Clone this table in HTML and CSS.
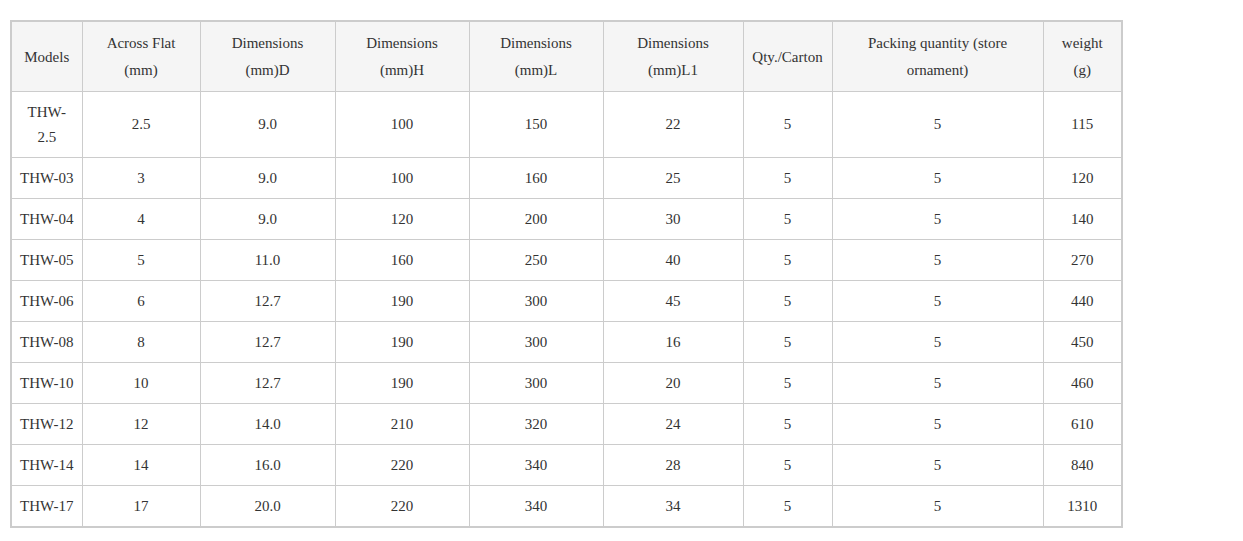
FILE: index.html
```html
<!DOCTYPE html>
<html lang="en">
<head>
<meta charset="utf-8">
<title>THW specifications</title>
<link rel="stylesheet" href="styles.css">
</head>
<body>
<div class="wrap">
<table class="spec">
  <colgroup>
    <col class="c1"><col class="c2"><col class="c3"><col class="c4"><col class="c5"><col class="c6"><col class="c7"><col class="c8"><col class="c9">
  </colgroup>
  <thead>
    <tr>
      <th>Models</th>
      <th>Across Flat<br>(mm)</th>
      <th>Dimensions<br>(mm)D</th>
      <th>Dimensions<br>(mm)H</th>
      <th>Dimensions<br>(mm)L</th>
      <th>Dimensions<br>(mm)L1</th>
      <th>Qty./Carton</th>
      <th>Packing quantity (store<br>ornament)</th>
      <th>weight<br>(g)</th>
    </tr>
  </thead>
  <tbody>
    <tr class="tall"><td>THW-2.5</td><td>2.5</td><td>9.0</td><td>100</td><td>150</td><td>22</td><td>5</td><td>5</td><td>115</td></tr>
    <tr><td>THW-03</td><td>3</td><td>9.0</td><td>100</td><td>160</td><td>25</td><td>5</td><td>5</td><td>120</td></tr>
    <tr><td>THW-04</td><td>4</td><td>9.0</td><td>120</td><td>200</td><td>30</td><td>5</td><td>5</td><td>140</td></tr>
    <tr><td>THW-05</td><td>5</td><td>11.0</td><td>160</td><td>250</td><td>40</td><td>5</td><td>5</td><td>270</td></tr>
    <tr><td>THW-06</td><td>6</td><td>12.7</td><td>190</td><td>300</td><td>45</td><td>5</td><td>5</td><td>440</td></tr>
    <tr><td>THW-08</td><td>8</td><td>12.7</td><td>190</td><td>300</td><td>16</td><td>5</td><td>5</td><td>450</td></tr>
    <tr><td>THW-10</td><td>10</td><td>12.7</td><td>190</td><td>300</td><td>20</td><td>5</td><td>5</td><td>460</td></tr>
    <tr><td>THW-12</td><td>12</td><td>14.0</td><td>210</td><td>320</td><td>24</td><td>5</td><td>5</td><td>610</td></tr>
    <tr><td>THW-14</td><td>14</td><td>16.0</td><td>220</td><td>340</td><td>28</td><td>5</td><td>5</td><td>840</td></tr>
    <tr><td>THW-17</td><td>17</td><td>20.0</td><td>220</td><td>340</td><td>34</td><td>5</td><td>5</td><td>1310</td></tr>
  </tbody>
</table>
</div>
</body>
</html>
```
FILE: styles.css
```css
html, body {
  margin: 0;
  padding: 0;
  background: #ffffff;
}

.wrap {
  padding: 20px 0 0 10px;
}

.spec {
  border-collapse: collapse;
  table-layout: fixed;
  width: 1111px;
  font-family: "Liberation Serif", "Times New Roman", serif;
  font-size: 15px;
  color: #333333;
  border: 2px solid #cccccc;
}

.c1 { width: 71px; }
.c2 { width: 118px; }
.c3 { width: 135px; }
.c4 { width: 134px; }
.c5 { width: 134px; }
.c6 { width: 140px; }
.c7 { width: 89px; }
.c8 { width: 211px; }
.c9 { width: 79px; }

.spec th,
.spec td {
  border: 1px solid #cccccc;
  padding: 8px 8px;
  text-align: center;
  vertical-align: middle;
  font-weight: normal;
}

.spec th {
  background: #f5f5f5;
  line-height: 27px;
  padding-bottom: 7px;
}

.spec td {
  line-height: 24px;
}

.spec .tall td {
  line-height: 24.5px;
}
```
